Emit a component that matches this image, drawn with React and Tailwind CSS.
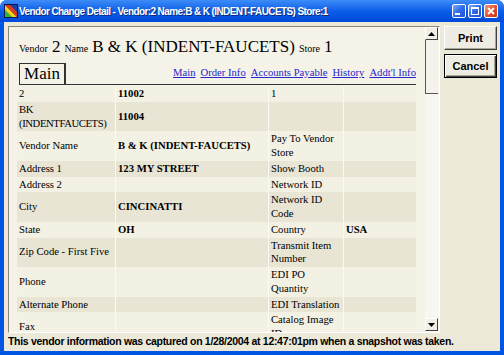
import React from "react";

// Vendor snapshot rows: label, value, label, value
const rows = [
  ["2", "11002", "1", ""],
  ["BK (INDENTFAUCETS)", "11004", "", ""],
  ["Vendor Name", "B & K (INDENT-FAUCETS)", "Pay To Vendor Store", ""],
  ["Address 1", "123 MY STREET", "Show Booth", ""],
  ["Address 2", "", "Network ID", ""],
  ["City", "CINCINATTI", "Network ID Code", ""],
  ["State", "OH", "Country", "USA"],
  ["Zip Code - First Five", "", "Transmit Item Number", ""],
  ["Phone", "", "EDI PO Quantity", ""],
  ["Alternate Phone", "", "EDI Translation", ""],
  ["Fax", "", "Catalog Image ID", ""],
];

const links = ["Main", "Order Info", "Accounts Payable", "History", "Addt'l Info"];

const AppIcon = () => (
  <svg width="14" height="14" viewBox="0 0 14 14">
    <rect x="0.5" y="0.5" width="13" height="13" fill="#1c3f9c" stroke="#0a1a50" />
    <polygon points="1,13 1,6 8,13" fill="#2fb52f" />
    <polygon points="1,6 1,1 13,13 8,13" fill="#f2d31b" />
    <polygon points="1,1 6,1 13,8 13,13" fill="#e03a1e" />
  </svg>
);

const CaptionButton = ({ kind }) => {
  const bg =
    kind === "close"
      ? "bg-gradient-to-br from-[#F29A7C] via-[#E2522E] to-[#C13A16]"
      : "bg-gradient-to-br from-[#7EAAF9] via-[#2E6BEB] to-[#1F4FD2]";
  return (
    <div className={`w-[14px] h-[14px] rounded-[2px] border border-white flex items-center justify-center ${bg}`}>
      {kind === "min" && (
        <svg width="12" height="12" viewBox="0 0 12 12">
          <rect x="2" y="8" width="5" height="2" fill="#fff" />
        </svg>
      )}
      {kind === "max" && (
        <svg width="12" height="12" viewBox="0 0 12 12">
          <rect x="2.5" y="2.5" width="7" height="7" fill="none" stroke="#fff" />
          <rect x="2" y="2" width="8" height="2" fill="#fff" />
        </svg>
      )}
      {kind === "close" && (
        <svg width="12" height="12" viewBox="0 0 12 12">
          <path d="M3 3 L9 9 M9 3 L3 9" stroke="#fff" strokeWidth="1.8" />
        </svg>
      )}
    </div>
  );
};

const ArrowButton = ({ up }) => (
  <div className="h-[13px] bg-[#F1EFE5] border-t border-l border-t-white border-l-white border-r border-b border-r-[#404040] border-b-[#404040] flex items-center justify-center">
    <svg width="7" height="4" viewBox="0 0 7 4">
      {up ? <polygon points="3.5,0 7,4 0,4" fill="#000" /> : <polygon points="0,0 7,0 3.5,4" fill="#000" />}
    </svg>
  </div>
);

const Scrollbar = () => (
  <div className="w-[13px] flex flex-col bg-[#F7F6F0] pb-[1px]">
    <ArrowButton up />
    <div className="h-[54px] border-l border-b border-[#555] bg-[#F4F2EA]" />
    <div className="flex-1" />
    <ArrowButton />
  </div>
);

const VendorTable = () => (
  <table className="table-fixed border-separate border-spacing-0 w-[399px] ml-[8px] mt-[1px] font-['Liberation_Serif',serif] text-[10.67px] leading-[13.75px] text-black">
    <colgroup>
      <col className="w-[98px]" />
      <col className="w-[153px]" />
      <col className="w-[75px]" />
      <col className="w-[73px]" />
    </colgroup>
    <tbody>
      {rows.map((r, i) => (
        <tr key={i} className={i % 2 === 0 ? "bg-[#F3F1E3]" : "bg-[#E8E5D5]"}>
          <td className={`px-[2px] py-[1px] align-middle ${i === 1 ? "tracking-[-0.4px]" : ""}`}>{r[0]}</td>
          <td className="px-[2px] py-[1px] align-middle font-bold border-l border-[#FAF9F3]">{r[1]}</td>
          <td className="px-[2px] py-[1px] align-middle border-l border-[#FAF9F3]">{r[2]}</td>
          <td className="px-[2px] py-[1px] align-middle font-bold border-l border-[#FAF9F3]">{r[3]}</td>
        </tr>
      ))}
    </tbody>
  </table>
);

const Panel = () => (
  <div className="w-[432px] h-[307px] flex border-t border-l border-t-[#8A877A] border-l-[#8A877A] border-r border-b border-r-white border-b-white">
    <div className="w-[416px] h-full overflow-hidden bg-[#F5F3E8]">
      <div className="pt-[10px] pl-[10px] leading-[20px] font-['Liberation_Serif',serif] text-black whitespace-nowrap">
        <span className="text-[10px]">Vendor</span> <span className="text-[17px]">2</span>{" "}
        <span className="text-[10px]">Name</span> <span className="text-[17px]">B &amp; K (INDENT-FAUCETS)</span>{" "}
        <span className="text-[10px]">Store</span> <span className="text-[17px]">1</span>
      </div>
      <div className="flex items-end mt-[4px] ml-[10px] mr-[9px] font-['Liberation_Serif',serif]">
        <div className="w-[47px] h-[22px] border border-[#333] border-r-2 flex items-center justify-center text-[17px] leading-[20px] text-black">
          Main
        </div>
        <div className="flex-1 flex justify-end gap-[5px] border-b border-[#333] pb-[5px] text-[10.67px] leading-[13px]">
          {links.map((l) => (
            <span key={l} className="text-[#2626C9] underline">
              {l}
            </span>
          ))}
        </div>
      </div>
      <VendorTable />
    </div>
    <Scrollbar />
    <div className="flex-1 bg-[#F7F6F0]" />
  </div>
);

const Buttons = () => (
  <div className="ml-[4px] w-[53px] flex flex-col gap-[4px] text-[11px] font-bold text-black">
    <div className="h-[24px] bg-[#EFEDE3] border border-t-white border-l-white border-r-[#404040] border-b-[#404040] shadow-[inset_-1px_-1px_0_#ACA899] flex items-center justify-center">
      Print
    </div>
    <div className="h-[24px] bg-[#EFEDE3] border border-black shadow-[inset_1px_1px_0_#fff,inset_-1px_-1px_0_#404040,inset_-2px_-2px_0_#ACA899] flex items-center justify-center">
      Cancel
    </div>
  </div>
);

export default function App() {
  return (
    <div className="w-[504px] h-[355px] flex flex-col bg-[#0055E5] rounded-t-[7px] overflow-hidden font-['Liberation_Sans',sans-serif]">
      <div className="h-[22px] flex items-center pl-[4px] pr-[6px] bg-gradient-to-b from-[#3D8CF8] via-[#0A5EE9] to-[#0049D8]">
        <AppIcon />
        <span className="ml-[1px] text-white font-bold text-[10px] tracking-[-0.6px] [text-shadow:1px_1px_0_#0A2A80] whitespace-nowrap">
          Vendor Change Detail - Vendor:2 Name:B &amp; K (INDENT-FAUCETS) Store:1
        </span>
        <div className="ml-auto flex gap-[2px]">
          <CaptionButton kind="min" />
          <CaptionButton kind="max" />
          <CaptionButton kind="close" />
        </div>
      </div>
      <div className="flex-1 mx-[4px] mb-[4px] bg-[#ECE9D8] flex flex-col min-h-0">
        <div className="h-[311px] flex pt-[4px] pl-[4px]">
          <Panel />
          <Buttons />
        </div>
        <div className="flex-1 flex items-center pl-[4px] text-[10.5px] tracking-[-0.3px] font-bold text-black whitespace-nowrap">
          This vendor information was captured on 1/28/2004 at 12:47:01pm when a snapshot was taken.
        </div>
      </div>
    </div>
  );
}
